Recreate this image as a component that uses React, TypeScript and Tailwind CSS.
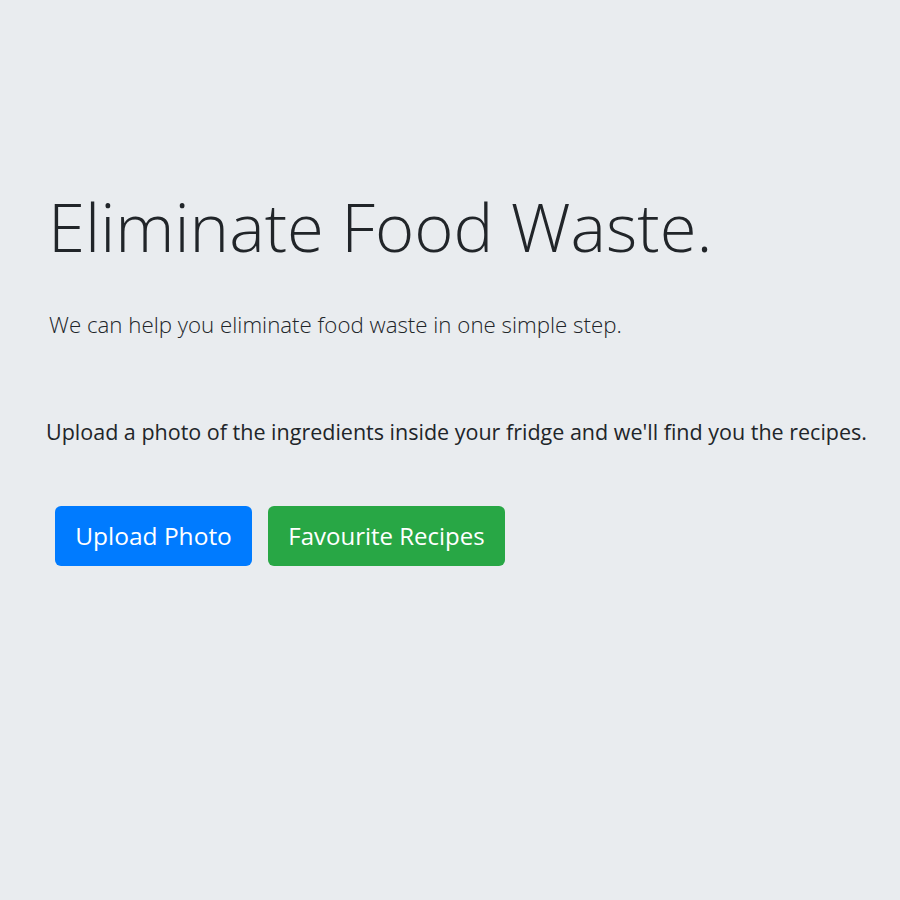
export default function App() {
  return (
    <div className="min-h-[900px] bg-[#e9ecef] text-[#212529] font-['Open_Sans',sans-serif]">
      <div className="pt-[186px] pl-[48px]">
        <h1 className="text-[67px] font-light leading-[80px]">Eliminate Food Waste.</h1>
        <p className="mt-[44px] ml-[1px] text-[22.3px] font-light leading-[30px]">
          We can help you eliminate food waste in one simple step.
        </p>
        <p className="mt-[77px] -ml-[2px] text-[21.5px] leading-[30px]">
          Upload a photo of the ingredients inside your fridge and we'll find you the recipes.
        </p>
        <div className="mt-[59px] ml-[7px] flex gap-[16px]">
          <button className="h-[60px] w-[197px] rounded-[6px] bg-[#007bff] text-[24.5px] text-white">
            Upload Photo
          </button>
          <button className="h-[60px] w-[237px] rounded-[6px] bg-[#28a745] text-[24px] text-white">
            Favourite Recipes
          </button>
        </div>
      </div>
    </div>
  );
}
